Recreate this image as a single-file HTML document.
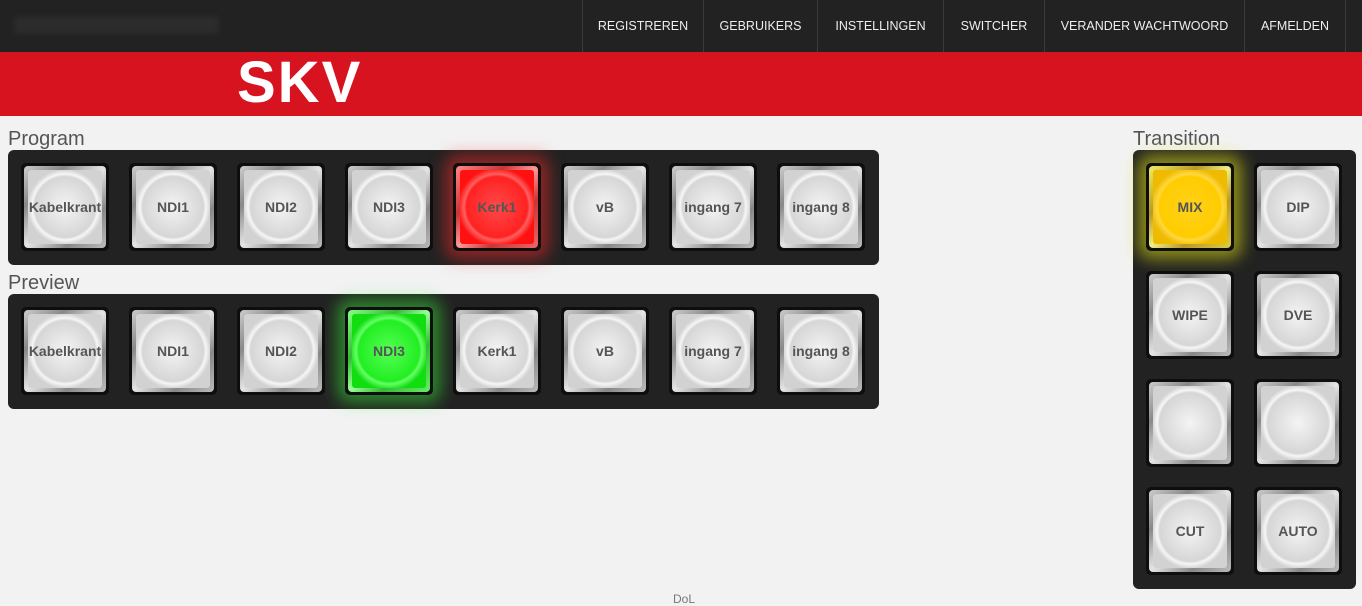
<!DOCTYPE html>
<html><head><meta charset="utf-8"><style>
*{margin:0;padding:0;box-sizing:border-box}
body{width:1362px;height:602px;background:#f2f2f2;font-family:"Liberation Sans",sans-serif;position:relative;overflow:hidden}
.nav{position:absolute;left:0;top:0;width:1362px;height:52px;background:#222}
.brand{position:absolute;left:14px;top:16px;width:205px;height:18px;background:#2c2c2c;filter:blur(3px);border-radius:4px}
.nav a{position:absolute;top:0;height:52px;line-height:53px;color:#eee;font-size:12.5px;text-align:center;border-left:1px solid #3a3a3a;text-decoration:none}
.red{position:absolute;left:0;top:52px;width:1362px;height:64px;background:#d71320}
.logo{position:absolute;left:237px;top:53px;color:#fff;font-weight:bold;font-size:58px;letter-spacing:2px;line-height:60px}
h2{position:absolute;font-weight:normal;font-size:20px;color:#555}
.panel{position:absolute;background:#222;border-radius:6px}
.b{position:absolute;width:88px;height:88px;background:#0e0e0e;border-radius:5px}
.b .i{position:absolute;left:3px;top:3px;right:3px;bottom:3px;border-radius:4px;background:linear-gradient(135deg,#ccc,#888 25%,#e5e5e5 50%,#888 75%,#bbb)}
.b .f{position:absolute;left:7px;top:7px;right:7px;bottom:7px;border-radius:3px;background:radial-gradient(circle at 50% 50%,#f4f4f4 0,#d6d6d6 58%,#f6f6f6 63%,#d2d2d2 72%);display:flex;align-items:center;justify-content:center;font-weight:bold;font-size:14px;color:#555}
.b.r{box-shadow:0 0 16px 8px rgba(255,40,40,.5)}
.b.r .i{background:linear-gradient(135deg,#f88,#c33 30%,#f99 50%,#c33 70%,#e66)}
.b.r .f{background:radial-gradient(circle,#ff4a4a 0,#f22 58%,#ff6060 63%,#f11 75%)}
.b.g{box-shadow:0 0 16px 8px rgba(60,255,60,.45)}
.b.g .i{background:linear-gradient(135deg,#8f8,#3b3 30%,#9f9 50%,#3b3 70%,#6e6)}
.b.g .f{background:radial-gradient(circle,#5f5 0,#2e2 58%,#6f6 63%,#1d1 75%)}
.b.y{box-shadow:0 0 16px 8px rgba(230,230,20,.55)}
.b.y .i{background:linear-gradient(135deg,#ee6,#b92 30%,#ee8 50%,#b92 70%,#dc4)}
.b.y .f{background:radial-gradient(circle,#ffd21a 0,#fc0 58%,#ffd840 63%,#eb0 75%)}
.foot{position:absolute;left:673px;top:592px;font-size:12px;color:#777}
</style></head><body>
<div class="nav"><div class="brand"></div>
<a style="left:582px;width:121px">REGISTREREN</a>
<a style="left:703px;width:114px">GEBRUIKERS</a>
<a style="left:817px;width:126px">INSTELLINGEN</a>
<a style="left:943px;width:101px">SWITCHER</a>
<a style="left:1044px;width:200px">VERANDER WACHTWOORD</a>
<a style="left:1244px;width:102px;border-right:1px solid #3a3a3a">AFMELDEN</a>
</div>
<div class="red"></div><div class="logo">SKV</div>
<h2 style="left:8px;top:128px">Program</h2>
<h2 style="left:8px;top:272px">Preview</h2>
<h2 style="left:1133px;top:128px">Transition</h2>
<div class="panel" style="left:8px;top:150px;width:871px;height:115px"></div>
<div class="panel" style="left:8px;top:294px;width:871px;height:115px"></div>
<div class="panel" style="left:1133px;top:150px;width:223px;height:439px"></div>

<div class="b" style="left:21px;top:163px"><div class="i"></div><div class="f">Kabelkrant</div></div>
<div class="b" style="left:129px;top:163px"><div class="i"></div><div class="f">NDI1</div></div>
<div class="b" style="left:237px;top:163px"><div class="i"></div><div class="f">NDI2</div></div>
<div class="b" style="left:345px;top:163px"><div class="i"></div><div class="f">NDI3</div></div>
<div class="b r" style="left:453px;top:163px"><div class="i"></div><div class="f">Kerk1</div></div>
<div class="b" style="left:561px;top:163px"><div class="i"></div><div class="f">vB</div></div>
<div class="b" style="left:669px;top:163px"><div class="i"></div><div class="f">ingang 7</div></div>
<div class="b" style="left:777px;top:163px"><div class="i"></div><div class="f">ingang 8</div></div>

<div class="b" style="left:21px;top:307px"><div class="i"></div><div class="f">Kabelkrant</div></div>
<div class="b" style="left:129px;top:307px"><div class="i"></div><div class="f">NDI1</div></div>
<div class="b" style="left:237px;top:307px"><div class="i"></div><div class="f">NDI2</div></div>
<div class="b g" style="left:345px;top:307px"><div class="i"></div><div class="f">NDI3</div></div>
<div class="b" style="left:453px;top:307px"><div class="i"></div><div class="f">Kerk1</div></div>
<div class="b" style="left:561px;top:307px"><div class="i"></div><div class="f">vB</div></div>
<div class="b" style="left:669px;top:307px"><div class="i"></div><div class="f">ingang 7</div></div>
<div class="b" style="left:777px;top:307px"><div class="i"></div><div class="f">ingang 8</div></div>

<div class="b y" style="left:1146px;top:163px"><div class="i"></div><div class="f">MIX</div></div>
<div class="b" style="left:1254px;top:163px"><div class="i"></div><div class="f">DIP</div></div>
<div class="b" style="left:1146px;top:271px"><div class="i"></div><div class="f">WIPE</div></div>
<div class="b" style="left:1254px;top:271px"><div class="i"></div><div class="f">DVE</div></div>
<div class="b" style="left:1146px;top:379px"><div class="i"></div><div class="f"></div></div>
<div class="b" style="left:1254px;top:379px"><div class="i"></div><div class="f"></div></div>
<div class="b" style="left:1146px;top:487px"><div class="i"></div><div class="f">CUT</div></div>
<div class="b" style="left:1254px;top:487px"><div class="i"></div><div class="f">AUTO</div></div>
<div class="foot">DoL</div>
</body></html>
